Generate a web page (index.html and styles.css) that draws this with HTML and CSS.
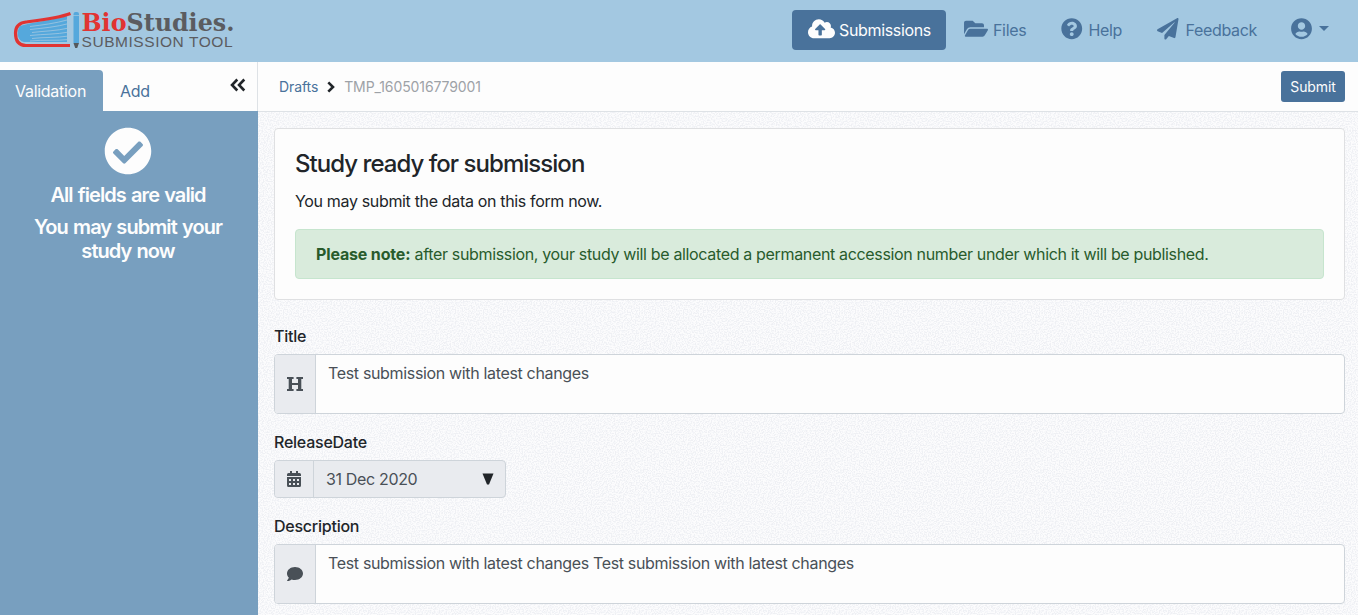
FILE: index.html
```html
<!DOCTYPE html>
<html lang="en">
<head>
<meta charset="utf-8">
<title>BioStudies Submission Tool</title>
<link rel="stylesheet" href="styles.css">
</head>
<body>
<header class="header">
  <svg class="logo" width="224" height="42" viewBox="12 9 224 42" role="img" aria-label="BioStudies Submission Tool">
    <path d="M20 26C32 22 48 21 67 16V42H24C17 41 16 31 20 26Z" fill="#55a8dc"/>
    <g fill="none" stroke="#a3c8e1" stroke-width=".8">
      <path d="M30 26.500C42 25 55 23.500 69 19.500"/><path d="M30 29.500C44 28 56 27 69 23.500"/><path d="M32 32.500C44 31 56 31 69 28"/><path d="M30 35.500C44 34 56 34.500 69 32"/><path d="M32 38.500C44 37 56 38 69 36"/><path d="M30 41C44 39.500 56 41 69 39.500"/>
    </g>
    <path d="M70.500 13.500C59 18 42 20 26 22C18 23 15.500 27 15.500 33C15.500 41 19 45.500 26 45.500H70" fill="none" stroke="#e13432" stroke-width="3.200"/>
    <path d="M73.500 14q0-2 2-2h1.500q2 0 2 2v29h-5.500z" fill="#55a8dc"/>
    <path d="M73 15.500h6" stroke="#a3c8e1" stroke-width=".7"/>
    <path d="M73.500 43h5.500l-1.800 5h-2z" fill="#55595c"/>
    <text x="81.500" y="31" class="logo-name" textLength="153" lengthAdjust="spacingAndGlyphs"><tspan fill="#e13432">Bio</tspan><tspan fill="#5b5c60">Studies.</tspan></text>
    <text x="81.500" y="47" class="logo-sub" textLength="151" lengthAdjust="spacing">SUBMISSION TOOL</text>
  </svg>
  <nav class="nav">
    <a class="nav-item active"><svg width="27" height="21.600" viewBox="0 0 640 512"><path d="M537.6 226.6c4.1-10.7 6.4-22.4 6.4-34.6 0-53-43-96-96-96-19.7 0-38.1 6-53.3 16.2C367 64.2 315.3 32 256 32c-88.4 0-160 71.6-160 160 0 2.7.1 5.4.2 8.1C40.2 219.8 0 273.2 0 336c0 79.500 64.500 144 144 144h368c70.700 0 128-57.300 128-128 0-61.900-44-113.600-102.400-125.400zM393.400 288H328v112c0 8.800-7.200 16-16 16h-48c-8.800 0-16-7.200-16-16V288h-65.400c-14.300 0-21.400-17.200-11.300-27.300l105.400-105.400c6.200-6.200 16.400-6.200 22.600 0l105.400 105.400c10.100 10.100 2.900 27.300-11.300 27.300z"/></svg><span>Submissions</span></a>
    <a class="nav-item files"><svg width="24" height="21.300" viewBox="0 0 576 512"><path d="M572.694 292.093L500.270 416.248A63.997 63.997 0 0 1 444.989 448H45.025c-18.523 0-30.064-20.093-20.731-36.093l72.424-124.155A64 64 0 0 1 152 256h399.964c18.523 0 30.064 20.093 20.730 36.093zM152 224h328v-48c0-26.510-21.490-48-48-48H272l-64-64H48C21.490 64 0 85.490 0 112v278.046l69.077-118.418C86.214 242.250 117.989 224 152 224z"/></svg><span>Files</span></a>
    <a class="nav-item help"><svg width="21.500" height="21.500" viewBox="0 0 512 512"><path d="M504 256c0 136.997-111.043 248-248 248S8 392.997 8 256C8 119.083 119.043 8 256 8s248 111.083 248 248zM262.655 90c-54.497 0-89.255 22.957-116.549 63.758-3.536 5.286-2.353 12.415 2.715 16.258l34.699 26.310c5.205 3.947 12.621 3.008 16.665-2.122 17.864-22.658 30.113-35.797 57.303-35.797 20.429 0 45.698 13.148 45.698 32.958 0 14.976-12.363 22.667-32.534 33.976C247.128 238.528 216 254.941 216 296v4c0 6.627 5.373 12 12 12h56c6.627 0 12-5.373 12-12v-1.333c0-28.462 83.186-29.647 83.186-106.667 0-58.002-60.165-102-116.531-102zM256 338c-25.365 0-46 20.635-46 46 0 25.364 20.635 46 46 46s46-20.636 46-46c0-25.365-20.635-46-46-46z"/></svg><span>Help</span></a>
    <a class="nav-item feedback"><svg width="21.500" height="21.500" viewBox="0 0 512 512"><path d="M476 3.200L12.500 270.600c-18.100 10.400-15.800 35.600 2.200 43.200L121 358.400l287.300-253.200c5.500-4.900 13.300 2.600 8.600 8.300L176 407v80.500c0 23.600 28.500 32.900 42.500 15.800L282 426l124.600 52.200c14.200 6 30.400-2.900 33-18.200l72-432C515 7.800 493.300-6.800 476 3.200z"/></svg><span>Feedback</span></a>
    <a class="nav-item user"><svg width="21" height="21.500" viewBox="0 0 496 512"><path d="M248 8C111 8 0 119 0 256s111 248 248 248 248-111 248-248S385 8 248 8zm0 96c48.600 0 88 39.400 88 88s-39.400 88-88 88-88-39.400-88-88 39.400-88 88-88zm0 344c-58.700 0-111.300-26.600-146.500-68.200 18.800-35.400 55.600-59.800 98.500-59.800 2.400 0 4.800.4 7.100 1.100 13 4.200 26.600 6.900 40.900 6.900 14.300 0 28-2.700 40.900-6.900 2.300-.7 4.700-1.100 7.100-1.100 42.900 0 79.700 24.400 98.500 59.800C359.300 421.400 306.700 448 248 448z"/></svg><i class="caret"></i></a>
  </nav>
</header>
<div class="layout">
  <aside class="sidebar">
    <div class="tabs">
      <a class="tab selected">Validation</a>
      <a class="tab add">Add</a>
      <svg class="collapse" width="16" height="14" viewBox="0 0 16 14" fill="none" stroke="#212529" stroke-width="2.600"><path d="M7.300 1.500L2 7l5.300 5.500M14.300 1.500L9 7l5.300 5.500"/></svg>
    </div>
    <div class="status">
      <svg class="status-icon" width="48" height="48" viewBox="0 0 512 512" fill="#fdfdfd"><path d="M504 256c0 136.967-111.033 248-248 248S8 392.967 8 256 119.033 8 256 8s248 111.033 248 248zM227.314 387.314l184-184c6.248-6.248 6.248-16.379 0-22.627l-22.627-22.627c-6.248-6.249-16.379-6.249-22.628 0L216 308.118l-70.059-70.059c-6.248-6.248-16.379-6.248-22.628 0l-22.627 22.627c-6.248 6.248-6.248 16.379 0 22.627l104 104c6.249 6.249 16.379 6.249 22.628.001z"/></svg>
      <p class="status-text valid">All fields are valid</p>
      <p class="status-text">You may submit your<br>study now</p>
    </div>
  </aside>
  <main class="main">
    <div class="toolbar">
      <div class="crumbs"><a class="drafts">Drafts</a><svg width="8" height="12" viewBox="0 0 8 12" fill="none" stroke="#212529" stroke-width="2.600"><path d="M1.300 1.300L6 6l-4.700 4.700"/></svg><span class="accession">TMP_1605016779001</span></div>
      <button class="submit">Submit</button>
    </div>
    <div class="content">
      <section class="card">
        <h4 class="card-title">Study ready for submission</h4>
        <p class="card-text">You may submit the data on this form now.</p>
        <div class="alert"><strong>Please note:</strong> after submission, your study will be allocated a permanent accession number under which it will be published.</div>
      </section>
      <div class="field">
        <label class="label">Title</label>
        <div class="group tall">
          <div class="addon"><svg width="16" height="14" viewBox="0 0 16 14" fill="#495057"><path d="M0 0h6.600v1.900H5v4h6v-4H9.400V0H16v1.900h-1.700v10.200H16V14H9.400v-1.900H11v-4H5v4h1.600V14H0v-1.900h1.700V1.900H0z"/></svg></div>
          <div class="value">Test submission with latest changes</div>
        </div>
      </div>
      <div class="field">
        <label class="label">ReleaseDate</label>
        <div class="group date">
          <div class="addon"><svg width="14" height="16" viewBox="0 0 14 16" fill="#495057"><path fill-rule="evenodd" d="M0 5V3.500Q0 2 1.500 2H3V0h2v2h4V0h2v2h1.500Q14 2 14 3.500V5zM0 6h14v8.500q0 1.500-1.500 1.500h-11Q0 16 0 14.500zM2 8v2h2V8zm4 0v2h2V8zm4 0v2h2V8zM2 12v2h2v-2zm4 0v2h2v-2zm4 0v2h2v-2z"/></svg></div>
          <div class="value">31 Dec 2020<svg width="12" height="12" viewBox="0 0 12 12" fill="#212529"><path d="M.5.5h11L7 11.500H5z"/></svg></div>
        </div>
      </div>
      <div class="field">
        <label class="label">Description</label>
        <div class="group tall">
          <div class="addon"><svg width="16" height="16" viewBox="0 0 512 512" fill="#495057"><path d="M256 32C114.600 32 0 125.100 0 240c0 49.600 21.400 95 57 130.700C44.500 421.100 2.700 466 2.200 466.500c-2.200 2.300-2.800 5.700-1.500 8.700S4.800 480 8 480c66.300 0 116-31.800 140.600-51.400 32.700 12.300 69 19.400 107.400 19.400 141.400 0 256-93.100 256-208S397.400 32 256 32z"/></svg></div>
          <div class="value">Test submission with latest changes Test submission with latest changes</div>
        </div>
      </div>
    </div>
  </main>
</div>
</body>
</html>
```
FILE: styles.css
```css
* { box-sizing: border-box; }
body { margin: 0; height: 615px; overflow: hidden; font: 16px/24px Inter, "Liberation Sans", sans-serif; letter-spacing: -0.34px; color: #212529; }
p, h4 { margin: 0; }
svg { display: block; flex: none; }
.header { height: 62px; background: #a3c8e1; display: flex; justify-content: space-between; align-items: center; padding: 0 27px 0 12px; }
.logo { margin-top: -2px; }
.logo-name { font: bold 25px "DejaVu Serif", serif; letter-spacing: 0; }
.logo-sub { font: 15.500px "Liberation Sans", sans-serif; fill: #5b5c60; letter-spacing: 0; }
.nav { display: flex; align-items: center; height: 40px; margin-top: -2px; color: #49729b; }
.nav-item { display: flex; align-items: center; height: 40px; gap: 5px; }
.nav-item svg { fill: currentColor; margin-top: -2px; }
.active { width: 154px; padding-left: 16px; gap: 4px; background: #49729b; color: #fdfdfd; border-radius: 4px; }
.files { width: 98px; padding-left: 18px; }
.help { width: 99px; padding-left: 17px; gap: 6px; }
.feedback { width: 131px; padding-left: 14px; gap: 7px; }
.user { width: 57px; padding-left: 17px; gap: 7px; }
.caret { border: 5px solid transparent; border-top-color: currentColor; border-bottom: 0; margin-top: -3px; }
.layout { display: flex; height: 553px; }
.sidebar { width: 258px; background: #789fbf; flex: none; }
.tabs { height: 49px; background: #fdfdfd; border-right: 1px solid #dee2e6; display: flex; align-items: flex-end; padding-right: 11px; color: #49729b; }
.tab { height: 41px; line-height: 43px; padding-left: 15px; }
.selected { width: 103px; background: #789fbf; color: #fdfdfd; border-radius: 0 4px 0 0; letter-spacing: -0.280px; }
.add { padding-left: 17px; }
.collapse { margin: 0 0 19px auto; }
.status { display: flex; flex-direction: column; align-items: center; padding: 16px 2px 0 0; color: #fdfdfd; text-align: center; }
.status-text { font-size: 20px; line-height: 24px; font-weight: 600; margin-bottom: 8px; letter-spacing: -0.920px; word-spacing: 1px; }
.valid { margin-top: 8px; }
.main { flex: 1; display: flex; flex-direction: column; background-color: #fcfcfd; }
.toolbar { height: 50px; background: #fdfdfd; border-bottom: 1px solid #dee2e6; display: flex; justify-content: space-between; align-items: center; padding: 0 13px 0 21px; font-size: 14px; letter-spacing: -0.100px; flex: none; }
.crumbs { display: flex; align-items: center; gap: 9px; }
.drafts { color: #49729b; }
.accession { color: #9da2a7; }
.submit { width: 64px; height: 31px; border: 0; border-radius: 3px; background: #49729b; color: #fdfdfd; font: 14px Inter, sans-serif; letter-spacing: -0.100px; padding: 0; }
.content { flex: 1; padding: 16px 13px 0 16px; background-image: url("data:image/svg+xml,%3Csvg xmlns='http://www.w3.org/2000/svg' width='200' height='200'%3E%3Cfilter id='n' x='0' y='0' width='100%25' height='100%25' color-interpolation-filters='sRGB'%3E%3CfeTurbulence type='fractalNoise' baseFrequency='.75' numOctaves='1' stitchTiles='stitch'/%3E%3CfeColorMatrix values='0 0 0 0 .92 0 0 0 0 .93 0 0 0 0 .95 5 0 0 0 -2.100'/%3E%3C/filter%3E%3Crect width='200' height='200' opacity='.75' filter='url(%23n)'/%3E%3C/svg%3E"); }
.card { height: 172px; border: 1px solid #dfe0e2; border-radius: 4px; background: #fdfdfd; padding: 20px; margin-bottom: 24px; }
.card-title { font-size: 24px; line-height: 29px; font-weight: 500; letter-spacing: -0.960px; margin-bottom: 11px; }
.card-text { margin-bottom: 16px; }
.alert { height: 50px; border: 1px solid #c6e5ce; border-radius: 4px; background: #d9ebdc; color: #285b2c; padding: 12px 20px; white-space: nowrap; }
.alert strong { font-weight: 700; letter-spacing: -0.160px; }
.field { margin-bottom: 16px; }
.label { display: block; width: max-content; font-weight: 500; margin-bottom: 6px; letter-spacing: -0.240px; }
.group { display: flex; border: 1px solid #ced4da; border-radius: 4px; overflow: hidden; background: #fdfdfd; color: #495057; }
.tall { height: 60px; }
.addon { width: 41px; background: #e9ebef; border-right: 1px solid #ced4da; display: flex; align-items: center; justify-content: center; flex: none; }
.value { flex: 1; padding: 6px 12px; }
.date { width: 232px; height: 38px; background: #e9ebef; }
.date .addon { width: 39px; }
.date .value { display: flex; justify-content: space-between; align-items: center; padding-right: 11px; }
```
